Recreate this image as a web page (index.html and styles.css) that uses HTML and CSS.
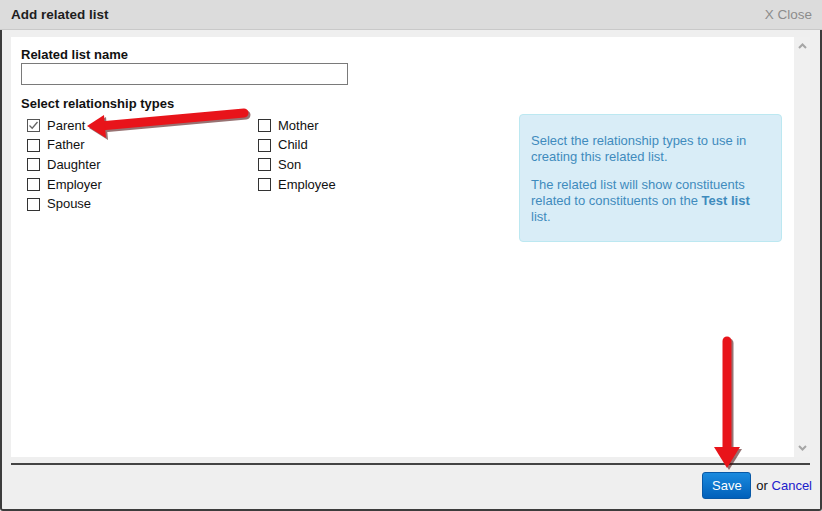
FILE: index.html
```html
<!DOCTYPE html>
<html lang="en">
<head>
    <meta charset="UTF-8">
    <title>Add related list</title>
    <link rel="stylesheet" href="styles.css">
</head>
<body>

<div class="dialog">
    <div class="dialog-header">
        <span class="dialog-title">Add related list</span>
        <a class="close-link">X Close</a>
    </div>
    <div class="dialog-body">
        <div class="scroll-area">
            <div class="panel">
                <div class="form-col">
                    <div class="field-label">Related list name</div>
                    <input type="text" class="text-input">
                    <div class="field-label section">Select relationship types</div>
                    <div class="type-grid">
                        <div class="type-row"><span class="box checked"><svg width="11" height="11" viewBox="0 0 11 11"><path d="M1.5 5.5 L4.2 8.2 L9.5 2" fill="none" stroke="#666" stroke-width="1.3"/></svg></span>Parent</div>
                        <div class="type-row"><span class="box"></span>Mother</div>
                        <div class="type-row"><span class="box"></span>Father</div>
                        <div class="type-row"><span class="box"></span>Child</div>
                        <div class="type-row"><span class="box"></span>Daughter</div>
                        <div class="type-row"><span class="box"></span>Son</div>
                        <div class="type-row"><span class="box"></span>Employer</div>
                        <div class="type-row"><span class="box"></span>Employee</div>
                        <div class="type-row"><span class="box"></span>Spouse</div>
                    </div>
                </div>
                <div class="info-box">
                    <p>Select the relationship types to use in creating this related list.</p>
                    <p>The related list will show constituents related to constituents on the <b>Test list</b> list.</p>
                </div>
            </div>
            <div class="scrollbar">
                <svg width="9" height="6" viewBox="0 0 9 6"><path d="M1 5 L4.5 1.5 L8 5" fill="none" stroke="#a6a6a6" stroke-width="2"/></svg>
                <svg width="9" height="6" viewBox="0 0 9 6"><path d="M1 1 L4.5 4.5 L8 1" fill="none" stroke="#a6a6a6" stroke-width="2"/></svg>
            </div>
        </div>
        <div class="divider"></div>
        <div class="dialog-footer">
            <button class="btn-save">Save</button>
            <span>or <a class="cancel-link">Cancel</a></span>
        </div>
    </div>

    <!-- red annotation arrows drawn over the dialog -->
    <svg class="annotations" width="822" height="511" viewBox="0 0 822 511">
        <g opacity="0.55" transform="translate(2,2)">
            <line x1="244" y1="113" x2="100" y2="126" stroke="#400" stroke-width="9" stroke-linecap="round"/>
            <polygon points="87,126 104,115 106,138" fill="#400"/>
            <line x1="727" y1="341" x2="727" y2="452" stroke="#400" stroke-width="9" stroke-linecap="round"/>
            <polygon points="714,447 740,447 727,468" fill="#400"/>
        </g>
        <line x1="244" y1="113" x2="100" y2="126" stroke="#e8141a" stroke-width="9" stroke-linecap="round"/>
        <polygon points="87,126 104,115 106,138" fill="#e8141a"/>
        <line x1="727" y1="341" x2="727" y2="452" stroke="#e8141a" stroke-width="9" stroke-linecap="round"/>
        <polygon points="714,447 740,447 727,468" fill="#e8141a"/>
    </svg>
</div>

</body>
</html>
```

FILE: styles.css
```css
html, body {
    margin: 0;
    padding: 0;
}

body {
    font-family: "Liberation Sans", Arial, sans-serif;
    font-size: 13px;
    color: #111;
    background-color: #efefef;
}

.dialog {
    position: relative;
    width: 822px;
    height: 511px;
}

.dialog-header {
    display: flex;
    align-items: center;
    justify-content: space-between;
    height: 29px;
    padding: 0 10px 0 11px;
    background-color: #dcdcdc;
    border-bottom: 1px solid #c9c9c9;
}

.dialog-title {
    font-size: 13.5px;
    font-weight: bold;
    color: #1e1e1e;
}

.close-link {
    font-size: 13.5px;
    color: #8c8c8c;
}

.dialog-body {
    padding-top: 7px;
    box-sizing: border-box;
    height: 481px;
    background-color: #efefef;
    border: 2px solid #3c3c3c;
    border-top: none;
    border-radius: 0 0 3px 3px;
}

.scroll-area {
    display: flex;
    height: 420px;
    margin: 0 10px 0 9px;
}

.panel {
    flex: 1;
    display: flex;
    align-items: flex-start;
    justify-content: space-between;
    padding: 10px 12px 0 10px;
    background-color: #fff;
}

.scrollbar {
    width: 15px;
    display: flex;
    flex-direction: column;
    align-items: center;
    justify-content: space-between;
    padding: 6px 0 6px 1px;
    background-color: #f0f0f0;
}

.form-col {
    width: 327px;
}

.field-label {
    font-weight: bold;
    line-height: 16px;
}

.field-label.section {
    margin-top: 11px;
}

.text-input {
    display: block;
    width: 327px;
    height: 22px;
    margin: 0;
    box-sizing: border-box;
    border: 1px solid #7a7a7a;
    background-color: #fff;
}

.type-grid {
    display: grid;
    grid-template-columns: 231px 1fr;
    grid-auto-rows: 19.6px;
    margin-top: 4px;
    padding-left: 6px;
}

.type-row {
    display: flex;
    align-items: center;
    line-height: 16px;
}

.box {
    display: flex;
    align-items: center;
    justify-content: center;
    width: 13px;
    height: 13px;
    margin-right: 7px;
    box-sizing: border-box;
    border: 1px solid #333;
    background-color: #fff;
}

.box.checked {
    border-color: #555;
}

.info-box {
    width: 263px;
    height: 128px;
    margin-top: 67px;
    padding: 18px 12px 3px 11px;
    box-sizing: border-box;
    background-color: #d9edf7;
    border: 1px solid #bce8f1;
    border-radius: 4px;
    color: #3f8bbd;
    line-height: 16px;
}

.info-box p {
    margin: 0 0 12px 0;
}

.divider {
    height: 2px;
    margin: 6px 10px 0 9px;
    background-color: #444;
}

.dialog-footer {
    display: flex;
    align-items: center;
    justify-content: flex-end;
    padding: 7px 8px 0 9px;
}

.btn-save {
    width: 49px;
    height: 27px;
    margin-right: 5px;
    padding: 0;
    font-family: "Liberation Sans", Arial, sans-serif;
    font-size: 13px;
    color: #fff;
    border: 1px solid #0758a6;
    border-radius: 3px;
    background: linear-gradient(#1b8ade, #0060ba);
}

.cancel-link {
    color: #2020cc;
}

.annotations {
    position: absolute;
    left: 0;
    top: 0;
    pointer-events: none;
}
```
